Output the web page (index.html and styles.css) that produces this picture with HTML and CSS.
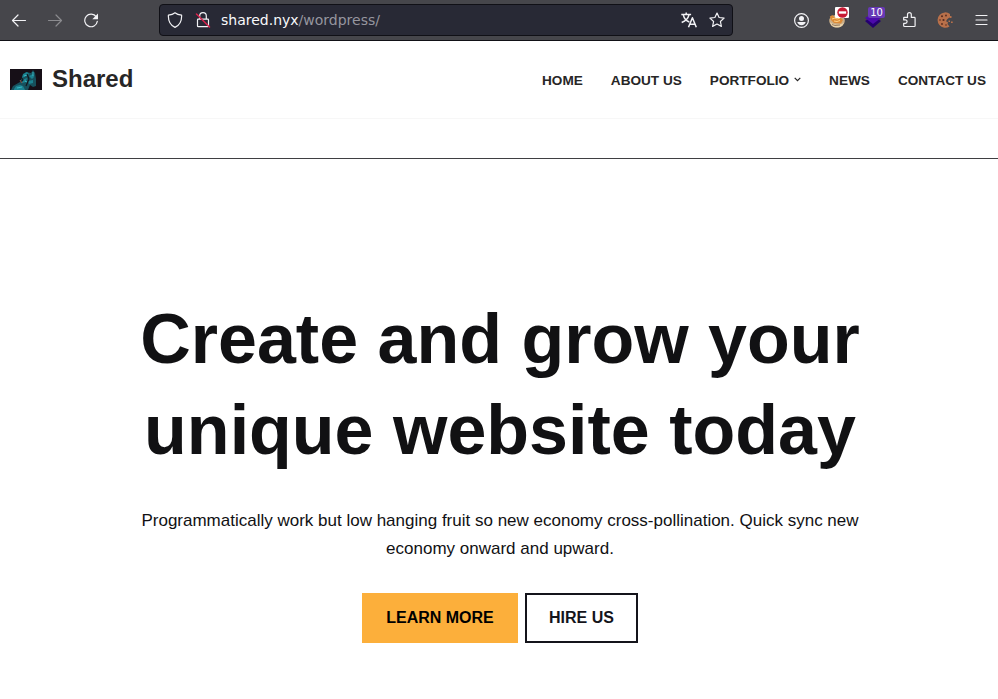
FILE: index.html
```html
<!DOCTYPE html>
<html lang="en">
<head>
<meta charset="utf-8">
<title>Shared</title>
<link rel="stylesheet" href="styles.css">
</head>
<body>
<div class="toolbar">
  <div class="history">
    <svg class="icon" viewBox="0 0 16 16"><path d="M14.500 8.500H1.700M7 3L1.500 8.500 7 14"/></svg>
    <svg class="icon disabled" viewBox="0 0 16 16"><path d="M1.500 8.500h12.800M9 3l5.500 5.500L9 14"/></svg>
    <svg class="icon" viewBox="0 0 16 16"><path d="M13.300 4.900A6.300 6.300 0 1 0 14.300 9.300"/><path class="solid" d="M15 1.500v5.700H9.300z"/></svg>
  </div>
  <div class="urlbar">
    <svg class="icon shield" viewBox="0 0 16 16"><path d="M8 .8C6.300 2.200 3.900 2.900 1.400 3.100 1.100 8.500 3 13 8 15.400c5-2.400 6.900-6.900 6.600-12.300C12.100 2.900 9.700 2.200 8 .8z"/></svg>
    <svg class="icon lock" viewBox="0 0 16 16"><path d="M4.700 7V4a3.300 3.300 0 0 1 6.600 0v3M3.200 7.200h9.600q.7 0 .7.700v6q0 .8-.8.800H3.300q-.8 0-.8-.8v-6q0-.7.7-.7z"/><path class="slash" d="M1.500 2l13 13"/></svg>
    <span class="url">shared.nyx<span class="path">/wordpress/</span></span>
    <svg class="icon translate" viewBox="0 0 16 16"><path d="M.3 2.600h9.800M5.200.5v2M2.300 2.800c.8 3.600 3 6 6 7.200M8 2.800C7.200 6.200 4.600 8.900.7 10.500M7.500 15.300l3.900-9.500 3.900 9.500M8.900 12.200h5"/></svg>
    <svg class="icon" viewBox="0 0 16 16"><path d="M8 1l2.100 4.500 5 .6-3.700 3.400 1 4.900L8 12l-4.400 2.400 1-4.900L.9 6.100l5-.6z"/></svg>
  </div>
  <div class="extensions">
    <svg class="icon" viewBox="0 0 16 16"><circle cx="8.500" cy="8.500" r="6.900"/><circle class="solid" cx="8.500" cy="6.400" r="2.500"/><path class="solid" d="M4.300 10h8.400c-.4 2-2 3.200-4.200 3.200S4.700 12 4.300 10z"/></svg>
    <div class="ext">
      <svg class="art" viewBox="0 0 16 16"><ellipse cx="8" cy="9" rx="7.800" ry="6.300" fill="#c9ad88"/><path d="M1 10c1 4 3 5.500 7 5.500s6-2 7-5c-3 3-11 3-14-.5z" fill="#ead3aa"/><path d="M.8 4.500L3.500 3 5 5l7 1 2 2-2 3.500-7-.5L2 8z" fill="#dc8b38"/><path d="M3 7l3-1 2 1 3-1M5 9l3 .5 3-1" fill="none" stroke="#ffd286" stroke-width="1"/><path d="M3 12.500l3 1 5-.5" fill="none" stroke="#80644d" stroke-width=".8"/></svg>
      <span class="badge blocked"><svg viewBox="0 0 12 12"><circle cx="6" cy="6" r="5.700" fill="#c71933"/><path d="M2 4.700h8v2.600H2z" fill="#fff"/></svg></span>
    </div>
    <div class="ext">
      <svg class="art" viewBox="0 0 16 16"><path d="M0 9l3-2h10l3 2-8 7z" fill="#24006f"/><path d="M0 6l8-5 8 5-8 6z" fill="#4c0aab"/></svg>
      <span class="badge count">10</span>
    </div>
    <svg class="icon" viewBox="0 0 16 16"><path d="M3 5.400h3.500V2.500a1.900 1.900 0 0 1 3.800 0v2.900h3q.8 0 .8.800v7.500q0 .8-.8.800H3.500q-.8 0-.8-.8v-2.400h1.700a1.700 1.700 0 0 0 0-3.400H2.700V5.900q0-.5.3-.5z"/></svg>
    <svg class="icon cookie" viewBox="0 0 16 16"><path d="M13 2A7.700 7.700 0 1 0 12.500 14.500L10.500 12l.5-1.800-2-1 1.200-2L13 5z" fill="#b8704a"/><g fill="#542a20"><circle cx="5" cy="4.300" r="1"/><circle cx="9" cy="3.500" r=".9"/><circle cx="3" cy="8" r=".8"/><circle cx="6.500" cy="8" r="1.100"/><circle cx="5" cy="12" r=".9"/><circle cx="9" cy="13" r=".8"/></g><path d="M11.500 8.500H13V10h-1.500zM14 9.500h1.700v1.500H14zM12.500 4h2v2h-2z" fill="#b8704a"/></svg>
    <svg class="icon" viewBox="0 0 16 16"><path d="M3 3.500h11M3 8h11M3 12.500h11"/></svg>
  </div>
</div>
<header class="header">
  <div class="brand">
    <svg class="logo" viewBox="0 0 32 21"><path fill="#160f17" d="M0 0h32v21H0z"/><path d="M1 21l2-4 7-4 3-7 3-3 5 1 2-3 2 3 1 6v7l-3 1-3-2-2 5z" fill="#17505c"/><path d="M13 5l4-2 2 2-3 2-4 2zM19 7l4-2 1 3-2 2zM12 11l5-2-1 4-4 1zM18 12l5-1v3l-4 1zM4 20l2-3 4-1 3 1 2 4H4z" fill="#1c8290"/><path d="M23 3v4M14 7l3-1M7 19l5-1M15 12l2 1" stroke="#36bac5" fill="none"/><path d="M11 8l2 3-2 2M17 5l2 5M16 17l3-7" stroke="#14151d" stroke-width="1.200" fill="none"/><path d="M10 11l2 3" stroke="#8d5442"/></svg>
    <span class="name">Shared</span>
  </div>
  <nav class="nav">
    <a>HOME</a><a>ABOUT US</a><a>PORTFOLIO<svg class="caret" viewBox="0 0 7 5"><path d="M.7.8l2.800 2.800L6.300.8"/></svg></a><a>NEWS</a><a>CONTACT US</a>
  </nav>
</header>
<div class="strip"></div>
<main class="hero">
  <h1>Create and grow your<br>unique website today</h1>
  <p>Programmatically work but low hanging fruit so new economy cross-pollination. Quick sync new<br>economy onward and upward.</p>
  <div class="actions"><a class="button primary">LEARN MORE</a><a class="button outline">HIRE US</a></div>
</main>
</body>
</html>
```
FILE: styles.css
```css
* { box-sizing: border-box; }
body { margin: 0; height: 699px; overflow: hidden; background: #fff; font-family: "Liberation Sans", Arial, sans-serif; color: #272626; }
svg { display: block; flex: none; }
.toolbar { height: 41px; background: #46464b; border-bottom: 1px solid #111116; display: flex; align-items: flex-start; }
.icon { width: 16px; height: 16px; fill: none; stroke: #f2f2f5; stroke-width: 1.2; stroke-linejoin: round; stroke-linecap: round; }
.icon .solid { fill: #f2f2f5; stroke: none; }
.history { width: 159px; padding: 12px 0 0 11px; display: flex; gap: 20px; }
.disabled { opacity: .4; }
.urlbar { width: 574px; height: 32px; margin-top: 4px; padding: 0 7px 0 8px; border: 1px solid #101016; border-radius: 4px; background: #282935; display: flex; align-items: center; }
.shield { margin-left: -1px; }
.lock { margin: 0 10px 0 12px; }
.lock .slash { stroke: #d9224c; stroke-width: 1.5; }
.url { flex: 1; font: 14px/20px "DejaVu Sans", sans-serif; color: #f9f9fb; white-space: nowrap; }
.path { color: #96969f; }
.translate { margin-right: 12px; stroke-width: 1.5; stroke-linecap: butt; }
.extensions { margin-left: 60px; padding-top: 12px; display: flex; gap: 20px; }
.ext { position: relative; width: 16px; height: 16px; }
.art { width: 16px; height: 16px; }
.badge { position: absolute; top: -5px; }
.blocked { left: 6px; width: 14px; height: 11px; padding: 0 1.5px; background: #fff; border-radius: 1px; }
.blocked svg { width: 11px; height: 11px; }
.count { left: 3px; width: 17px; height: 11px; border-radius: 2px; background: #6739b6; color: #fff; font: 10px/11px "DejaVu Sans", sans-serif; text-align: center; }
.cookie { stroke: none; }
.header { height: 78px; padding: 0 12px 0 10px; border-bottom: 1px solid #f7f7f7; display: flex; justify-content: space-between; align-items: center; }
.brand { display: flex; align-items: center; gap: 10px; margin-bottom: 1px; }
.logo { width: 32px; height: 21px; }
.name { font-size: 24px; line-height: 30px; font-weight: 700; }
.nav { display: flex; gap: 28px; margin-top: 2px; font-size: 13.6px; line-height: 20px; font-weight: 700; }
.nav a { display: flex; align-items: center; white-space: nowrap; }
.caret { width: 7px; height: 5px; margin: -3px 0 0 5px; fill: none; stroke: #272626; stroke-width: 1.2; }
.strip { height: 40px; border-bottom: 1px solid #3f3f42; }
.hero { padding-top: 135px; display: flex; flex-direction: column; align-items: center; text-align: center; padding-left: 2px; }
h1 { margin: 0; font-size: 70px; line-height: 91px; font-weight: 700; color: #111113; white-space: nowrap; }
p { margin: 31px 0 0; font-size: 17px; line-height: 28px; color: #111113; white-space: nowrap; }
.actions { display: flex; gap: 7px; margin-top: 30px; }
.button { height: 50px; display: flex; align-items: center; justify-content: center; font-size: 16px; font-weight: 700; color: #14141b; }
.primary { width: 156px; background: #fcaf3b; color: #000; }
.outline { width: 113px; border: 2px solid #14141b; }
```
